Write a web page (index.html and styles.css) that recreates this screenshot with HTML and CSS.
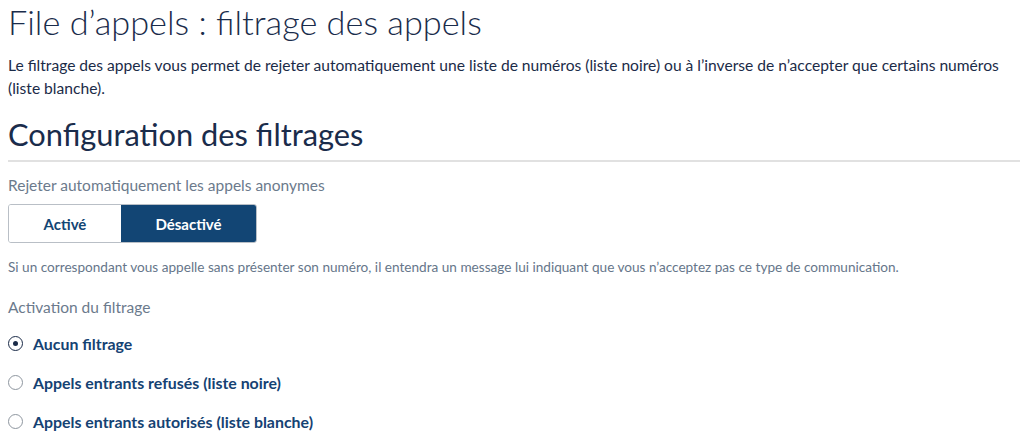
FILE: index.html
```html
<!DOCTYPE html>
<html lang="fr">
<head>
<meta charset="utf-8">
<title>File d’appels : filtrage des appels</title>
<link rel="stylesheet" href="styles.css">
</head>
<body>
<main class="page">
  <h1 class="title">File d’appels : filtrage des appels</h1>
  <p class="intro">Le filtrage des appels vous permet de rejeter automatiquement une liste de numéros (liste noire) ou à l’inverse de n’accepter que certains numéros (liste blanche).</p>

  <h2 class="section-title">Configuration des filtrages</h2>

  <div class="field">
    <div class="field-label">Rejeter automatiquement les appels anonymes</div>
    <div class="toggle">
      <button class="toggle-btn" type="button">Activé</button>
      <button class="toggle-btn is-active" type="button">Désactivé</button>
    </div>
    <p class="help">Si un correspondant vous appelle sans présenter son numéro, il entendra un message lui indiquant que vous n’acceptez pas ce type de communication.</p>
  </div>

  <div class="field">
    <div class="field-label">Activation du filtrage</div>
    <ul class="radios">
      <li class="radio is-checked"><span class="radio-dot"></span><span class="radio-label">Aucun filtrage</span></li>
      <li class="radio"><span class="radio-dot"></span><span class="radio-label">Appels entrants refusés (liste noire)</span></li>
      <li class="radio"><span class="radio-dot"></span><span class="radio-label">Appels entrants autorisés (liste blanche)</span></li>
    </ul>
  </div>
</main>
</body>
</html>
```

FILE: styles.css
```css
* { box-sizing: border-box; }
html, body { margin: 0; padding: 0; background: #fff; }
body {
  font-family: "Lato", "Open Sans", "Liberation Sans", sans-serif;
  color: #1b2b48;
}
.page { padding: 0 6px 0 8px; }

.title {
  margin: 0;
  padding-top: 2px;
  font-size: 34.3px;
  font-weight: 300;
  line-height: 40px;
  color: #1a2c4b;
}
.intro {
  margin: 12px 0 0;
  font-size: 15.6px;
  line-height: 23px;
  color: #1b2b48;
}
.section-title {
  margin: 16px 0 0;
  padding-bottom: 6px;
  font-size: 30.8px;
  font-weight: 400;
  line-height: 38px;
  color: #1a2c4b;
  border-bottom: 2px solid #e1e1e1;
}
.field { margin-top: 13px; }
.field + .field { margin-top: 22px; }
.field-label {
  font-size: 15.5px;
  line-height: 20px;
  color: #6b7a8c;
}
.toggle {
  display: flex;
  margin-top: 9px;
  width: 249px;
  height: 39px;
  border: 1px solid #b9bfc6;
  border-radius: 3px;
  overflow: hidden;
}
.toggle-btn {
  border: 0;
  margin: 0;
  padding: 0;
  font-family: inherit;
  font-size: 15px;
  font-weight: 700;
  color: #124574;
  background: #fff;
}
.toggle-btn:first-child { width: 112px; }
.toggle-btn:last-child { flex: 1; }
.toggle-btn.is-active { background: #124574; color: #fff; }
.help {
  margin: 16px 0 0;
  font-size: 13.6px;
  line-height: 16px;
  color: #66768a;
}
.radios {
  list-style: none;
  margin: 16px 0 0;
  padding: 0;
  display: flex;
  flex-direction: column;
  gap: 19px;
}
.radio {
  display: flex;
  align-items: center;
  gap: 10px;
  height: 20px;
}
.radio-dot {
  width: 15px;
  height: 15px;
  border-radius: 50%;
  border: 1px solid #8e969f;
  display: flex;
  align-items: center;
  justify-content: center;
  flex: none;
}
.radio.is-checked .radio-dot { border: 1.5px solid #1b2b48; }
.radio.is-checked .radio-dot::after {
  content: "";
  width: 5px;
  height: 5px;
  border-radius: 50%;
  background: #1b2b48;
}
.radio-label {
  font-size: 15.9px;
  font-weight: 700;
  color: #154273;
}
```
